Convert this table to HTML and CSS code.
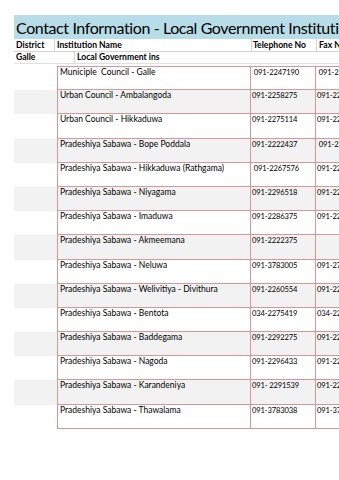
FILE: index.html
```html
<!DOCTYPE html>
<html>
<head>
<meta charset="utf-8">
<link rel="stylesheet" href="styles.css">
</head>
<body>
<div class="sheet">
  <div class="title">Contact Information - Local Government Institutions</div>
  <div class="row head">
    <div class="c1">District</div>
    <div class="c2">Institution Name</div>
    <div class="c3">Telephone No</div>
    <div class="c4">Fax No</div>
  </div>
  <div class="row sub">
    <div class="c1">Galle</div>
    <div class="c2"><span class="subname">Local Government ins</span></div>
    <div class="c3"></div>
    <div class="c4"></div>
  </div>
  <div class="data">
    <div class="row d"><div class="c1"></div><div class="c2">Municiple  Council - Galle</div><div class="c3"> 091-2247190</div><div class="c4"> 091-2247190</div></div>
    <div class="row d alt"><div class="c1"></div><div class="c2">Urban Council - Ambalangoda</div><div class="c3">091-2258275</div><div class="c4">091-2258275</div></div>
    <div class="row d"><div class="c1"></div><div class="c2">Urban Council - Hikkaduwa</div><div class="c3">091-2275114</div><div class="c4">091-2275114</div></div>
    <div class="row d alt"><div class="c1"></div><div class="c2">Pradeshiya Sabawa - Bope Poddala</div><div class="c3">091-2222437</div><div class="c4"> 091-2222437</div></div>
    <div class="row d"><div class="c1"></div><div class="c2">Pradeshiya Sabawa - Hikkaduwa (Rathgama)</div><div class="c3"> 091-2267576</div><div class="c4">091-2267576</div></div>
    <div class="row d alt"><div class="c1"></div><div class="c2">Pradeshiya Sabawa - Niyagama</div><div class="c3">091-2296518</div><div class="c4">091-2296518</div></div>
    <div class="row d"><div class="c1"></div><div class="c2">Pradeshiya Sabawa - Imaduwa</div><div class="c3">091-2286375</div><div class="c4">091-2286375</div></div>
    <div class="row d alt"><div class="c1"></div><div class="c2">Pradeshiya Sabawa - Akmeemana</div><div class="c3">091-2222375</div><div class="c4"></div></div>
    <div class="row d"><div class="c1"></div><div class="c2">Pradeshiya Sabawa - Neluwa</div><div class="c3">091-3783005</div><div class="c4">091-2783005</div></div>
    <div class="row d alt"><div class="c1"></div><div class="c2">Pradeshiya Sabawa - Welivitiya - Divithura</div><div class="c3">091-2260554</div><div class="c4">091-2260554</div></div>
    <div class="row d"><div class="c1"></div><div class="c2">Pradeshiya Sabawa - Bentota</div><div class="c3">034-2275419</div><div class="c4">034-2275419</div></div>
    <div class="row d alt"><div class="c1"></div><div class="c2">Pradeshiya Sabawa - Baddegama</div><div class="c3">091-2292275</div><div class="c4">091-2292275</div></div>
    <div class="row d"><div class="c1"></div><div class="c2">Pradeshiya Sabawa - Nagoda</div><div class="c3">091-2296433</div><div class="c4">091-2296433</div></div>
    <div class="row d alt"><div class="c1"></div><div class="c2">Pradeshiya Sabawa - Karandeniya</div><div class="c3">091- 2291539</div><div class="c4">091-2291539</div></div>
    <div class="row d"><div class="c1"></div><div class="c2">Pradeshiya Sabawa - Thawalama</div><div class="c3">091-3783038</div><div class="c4">091-3783038</div></div>
  </div>
</div>
</body>
</html>
```
FILE: styles.css
```css
html, body {
  margin: 0;
  padding: 0;
  background: #fff;
  overflow: hidden;
}
body {
  width: 339px;
  height: 480px;
  font-family: Lato, "Open Sans", "Liberation Sans", sans-serif;
  color: #000;
}
.sheet {
  margin: 15px 0 0 14px;
  width: 400px;
}
.title {
  height: 24px;
  line-height: 25px;
  background: #b7dee8;
  font-size: 16px;
  letter-spacing: -0.4px;
  padding-left: 2px;
  white-space: nowrap;
  overflow: hidden;
}
.row {
  display: grid;
  grid-template-columns: 43px 194px 65px 1fr;
  white-space: pre;
  font-size: 8.5px;
}
.row > div {
  overflow: hidden;
}
.head {
  height: 12px;
  line-height: 13px;
  font-weight: 700;
  font-size: 8.6px;
  border-bottom: 1px solid #d4d4d4;
}
.head .c1 { padding-left: 2px; border-right: 1px solid #d4d4d4; margin-right: 2px; }
.head .c3 { border-left: 1px solid #d4d4d4; padding-left: 1px; }
.head .c4 { border-left: 1px solid #d4d4d4; padding-left: 2px; }
.sub {
  height: 11px;
  line-height: 11px;
  font-weight: 700;
  font-size: 8.6px;
  border-bottom: 1px solid #e0e0e0;
}
.sub .c1 { padding-left: 2px; }
.sub .subname {
  display: block;
  margin-left: 17px;
  padding-left: 2px;
  border-left: 1px solid #d4d4d4;
}
.data {
  margin-top: 2px;
}
.d {
  height: 24.2px;
  box-sizing: border-box;
  line-height: 10px;
}
.d > div {
  padding-top: 0;
  box-sizing: border-box;
}
.d .c2, .d .c3, .d .c4 {
  border-bottom: 1px solid #da9694;
}
.d:first-child .c2, .d:first-child .c3, .d:first-child .c4 {
  border-top: 1px solid #da9694;
}
.d .c2 { border-left: 1px solid #da9694; border-right: 1px solid #da9694; padding-left: 2px; }
.d .c3 { border-right: 1px solid #da9694; padding-left: 1px; font-size: 7.6px; letter-spacing: -0.15px; }
.d .c4 { padding-left: 1px; font-size: 7.6px; letter-spacing: -0.15px; }
.alt { background: #f2f2f2; }
```
